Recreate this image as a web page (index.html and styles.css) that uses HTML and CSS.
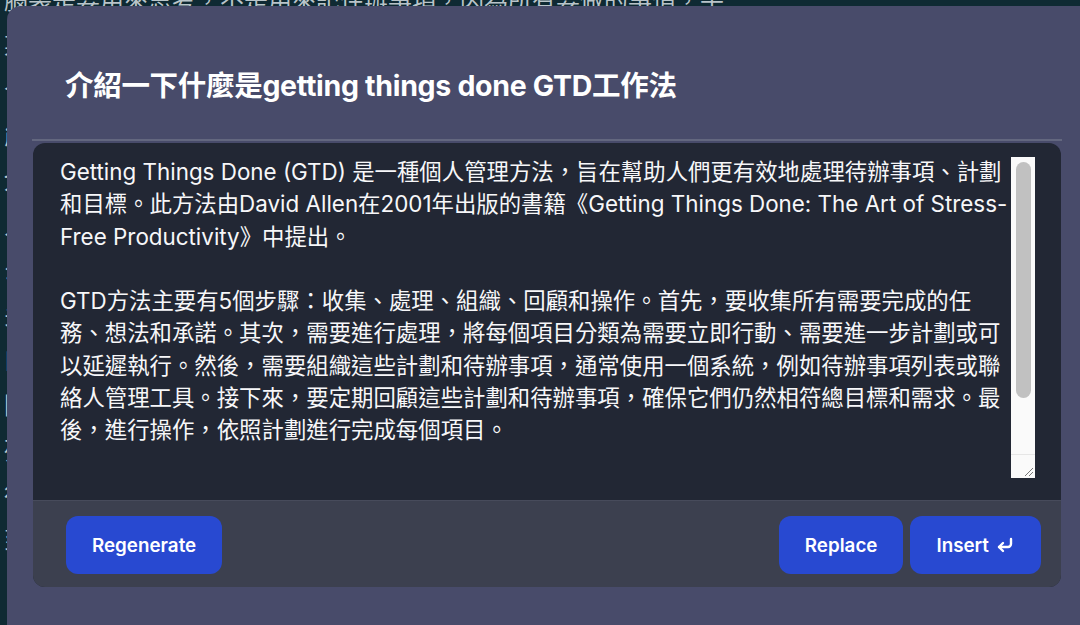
FILE: index.html
```html
<!DOCTYPE html>
<html lang="zh-Hant">
<head>
<meta charset="utf-8">
<title>GTD</title>
<link rel="stylesheet" href="styles.css">
</head>
<body>
<div class="backdrop">
  <p class="bg-line">腦袋是要用來思考，不是用來記住辦事項，因為所有要做的事情，平</p>
  <p class="bg-line">某</p>
  <p class="bg-line">个</p>
  <p class="bg-line">能</p>
  <p class="bg-line">划</p>
  <p class="bg-line">人</p>
  <p class="bg-line">么</p>
  <p class="bg-line">关</p>
  <p class="bg-line">口</p>
  <p class="bg-line">图</p>
  <p class="bg-line">列</p>
  <p class="bg-line">行</p>
  <p class="bg-line">到</p>
</div>
<div class="modal">
  <h1 class="title">介紹一下什麼是getting things done GTD工作法</h1>
  <div class="divider"></div>
  <div class="card">
    <div class="editor">
      <div class="text">
        <div class="line">Getting Things Done (GTD) 是一種個人管理方法，旨在幫助人們更有效地處理待辦事項、計劃</div>
        <div class="line">和目標。此方法由David Allen在2001年出版的書籍《Getting Things Done: The Art of Stress-</div>
        <div class="line">Free Productivity》中提出。</div>
        <div class="line">&nbsp;</div>
        <div class="line">GTD方法主要有5個步驟：收集、處理、組織、回顧和操作。首先，要收集所有需要完成的任</div>
        <div class="line">務、想法和承諾。其次，需要進行處理，將每個項目分類為需要立即行動、需要進一步計劃或可</div>
        <div class="line">以延遲執行。然後，需要組織這些計劃和待辦事項，通常使用一個系統，例如待辦事項列表或聯</div>
        <div class="line">絡人管理工具。接下來，要定期回顧這些計劃和待辦事項，確保它們仍然相符總目標和需求。最</div>
        <div class="line">後，進行操作，依照計劃進行完成每個項目。</div>
      </div>
      <div class="scrollbar">
        <div class="track"><div class="thumb"></div></div>
        <div class="corner">
          <svg class="grip" viewBox="0 0 12 12" width="12" height="12">
            <path d="M11 3L3 11M11 7L7 11" stroke="#777" stroke-width="1" fill="none"/>
          </svg>
        </div>
      </div>
    </div>
    <div class="footer">
      <button class="btn">Regenerate</button>
      <div class="spacer"></div>
      <button class="btn">Replace</button>
      <button class="btn">Insert
        <svg class="enter" viewBox="0 0 20 20" width="20" height="20">
          <path d="M16 4v5a3 3 0 0 1-3 3H4" stroke="#fff" stroke-width="2.4" fill="none" stroke-linecap="round" stroke-linejoin="round"/>
          <path d="M8 8l-4 4 4 4" stroke="#fff" stroke-width="2.4" fill="none" stroke-linecap="round" stroke-linejoin="round"/>
        </svg>
      </button>
    </div>
  </div>
</div>
</body>
</html>
```
FILE: styles.css
```css
html, body {
  margin: 0;
  padding: 0;
  width: 1080px;
  height: 625px;
  overflow: hidden;
  background: #0f2a33;
  font-family: "Inter", "Noto Sans CJK TC", sans-serif;
}

.backdrop {
  margin-top: -22px;
  padding-left: 4px;
  color: #b9c4c9;
  font-size: 24px;
  line-height: 45px;
}

.bg-line {
  margin: 0;
  white-space: nowrap;
}

.modal {
  position: absolute;
  left: 7px;
  top: 6px;
  width: 1090px;
  height: 619px;
  background: #484b6a;
  border-radius: 14px 14px 0 0;
  padding: 0 25px;
  box-sizing: border-box;
  overflow: hidden;
}

.title {
  margin: 0;
  padding: 58px 0 31px 33px;
  color: #ffffff;
  font-size: 28.5px;
  line-height: 44px;
  font-weight: 700;
  letter-spacing: -0.3px;
}

.divider {
  height: 2px;
  background: #63677f;
  width: 1030px;
}

.card {
  margin: 2px 0 0 1px;
  width: 1028px;
  border-radius: 12px;
  overflow: hidden;
  background: #222734;
}

.editor {
  display: flex;
  height: 357px;
  box-sizing: border-box;
  padding: 13px 26px 22px 27px;
}

.text {
  flex: 1;
  color: #f7f7f9;
  font-size: 22.4px;
  line-height: 32.3px;
  white-space: nowrap;
  overflow: hidden;
}

.line {
  height: 32.3px;
}

.scrollbar {
  width: 24px;
  margin-top: 1px;
  display: flex;
  flex-direction: column;
  background: #fafafa;
}

.track {
  flex: 1;
  padding: 5px 4px 0 5px;
}

.thumb {
  height: 236px;
  background: #c1c1c1;
  border-radius: 8px;
}

.corner {
  height: 23px;
  border-top: 1px solid #e6e6e6;
  display: flex;
  align-items: flex-end;
  justify-content: flex-end;
}

.grip {
  display: block;
  margin: 0 1px 1px 0;
}

.footer {
  display: flex;
  align-items: center;
  gap: 7px;
  background: #3c404f;
  border-top: 1px solid #474b5b;
  padding: 15px 20px 13px 33px;
}

.spacer {
  flex: 1;
}

.btn {
  display: flex;
  align-items: center;
  gap: 6px;
  height: 58px;
  padding: 0 26px;
  border: none;
  border-radius: 12px;
  background: #2849d1;
  color: #ffffff;
  font-family: "Inter", "Noto Sans CJK TC", sans-serif;
  font-size: 18.8px;
  font-weight: 600;
}

.enter {
  display: block;
}
```
